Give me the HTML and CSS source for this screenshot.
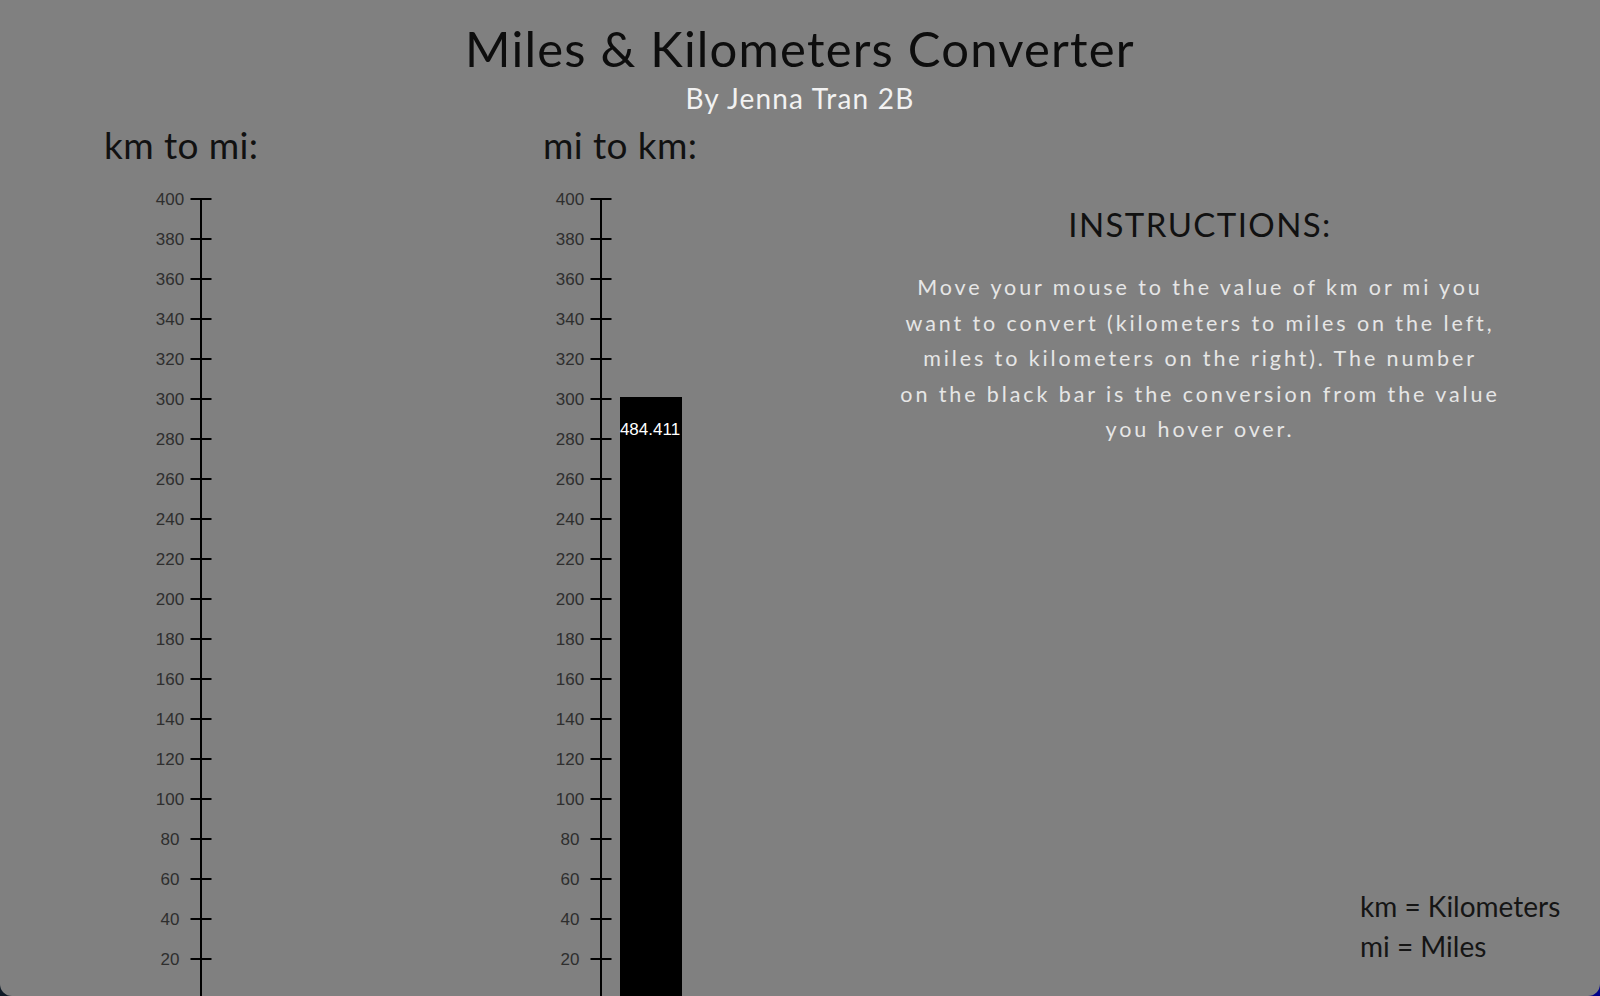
FILE: index.html
```html
<!DOCTYPE html>
<html lang="en">
<head>
<meta charset="utf-8">
<title>Miles &amp; Kilometers Converter</title>
<link rel="stylesheet" href="styles.css">
</head>
<body>
<div class="window">
  <header class="header">
    <h1 class="title">Miles &amp; Kilometers Converter</h1>
    <p class="byline">By Jenna Tran 2B</p>
  </header>
  <main class="main">
    <section class="col col-km">
      <h2 class="chart-title">km to mi:</h2>
      <svg class="chart" width="300" height="836" viewBox="0 0 300 836">
        <g class="axis">
          <line x1="97" y1="34" x2="97" y2="836"/>
        </g>
        <g class="ticks" id="ticks-km"></g>
      </svg>
    </section>
    <section class="col col-mi">
      <h2 class="chart-title">mi to km:</h2>
      <svg class="chart" width="300" height="836" viewBox="0 0 300 836">
        <g class="axis">
          <line x1="58" y1="34" x2="58" y2="836"/>
        </g>
        <g class="ticks" id="ticks-mi"></g>
        <rect class="bar" x="77" y="233" width="62" height="603"/>
        <text class="bar-label" x="107" y="265">484.411</text>
      </svg>
    </section>
    <section class="col col-info">
      <h2 class="info-title">INSTRUCTIONS:</h2>
      <p class="info-text">Move your mouse to the value of km or mi you<br>want to convert (kilometers to miles on the left,<br>miles to kilometers on the right). The number<br>on the black bar is the conversion from the value<br>you hover over.</p>
      <div class="legend">
        <div>km = Kilometers</div>
        <div>mi = Miles</div>
      </div>
    </section>
  </main>
</div>
<script>
(function () {
  function build(id, axisX) {
    var g = document.getElementById(id);
    var ns = "http://www.w3.org/2000/svg";
    for (var v = 20; v <= 400; v += 20) {
      var y = 835 - 2 * v;
      var l = document.createElementNS(ns, "line");
      l.setAttribute("x1", axisX - 10.5);
      l.setAttribute("x2", axisX + 10.5);
      l.setAttribute("y1", y);
      l.setAttribute("y2", y);
      g.appendChild(l);
      var t = document.createElementNS(ns, "text");
      t.setAttribute("x", axisX - 31);
      t.setAttribute("y", y);
      t.setAttribute("class", "tick-label");
      t.textContent = v;
      g.appendChild(t);
    }
  }
  build("ticks-km", 97);
  build("ticks-mi", 58);
})();
</script>
</body>
</html>
```

FILE: styles.css
```css
html, body {
  margin: 0;
  padding: 0;
}

body {
  width: 1600px;
  height: 996px;
  overflow: hidden;
  background: linear-gradient(to right, #0f1b27, #00008a);
  font-family: Lato, "Liberation Sans", sans-serif;
}

.window {
  width: 1600px;
  height: 996px;
  box-sizing: border-box;
  padding-top: 18px;
  background: #808080;
  border-radius: 0 0 12px 12px;
  overflow: hidden;
  display: flex;
  flex-direction: column;
}

.header {
  text-align: center;
}

.title {
  margin: 0;
  font-size: 49px;
  line-height: 60px;
  font-weight: 400;
  letter-spacing: 1.2px;
  color: #0d0d0d;
}

.byline {
  margin: 3px 0 0;
  font-size: 28px;
  line-height: 34px;
  letter-spacing: 1.2px;
  color: #f2f2f2;
}

.main {
  flex: 1;
  min-height: 0;
  margin-top: 7px;
  padding-left: 104px;
  display: flex;
}

.col {
  display: flex;
  flex-direction: column;
}

.col-km {
  width: 439px;
}

.col-mi {
  width: 357px;
}

.col-info {
  width: 600px;
  padding-top: 82px;
  padding-bottom: 30px;
  box-sizing: border-box;
  text-align: center;
}

.chart-title {
  margin: 0;
  padding-top: 3px;
  font-size: 37px;
  line-height: 39px;
  font-weight: 400;
  letter-spacing: 0.4px;
  color: #111;
  white-space: nowrap;
}

.chart {
  display: block;
  overflow: visible;
}

.axis line,
.ticks line {
  stroke: #000;
  stroke-width: 2;
}

.tick-label {
  font-family: "Liberation Sans", Arial, sans-serif;
  font-size: 17px;
  fill: #2e2e2e;
  text-anchor: middle;
  dominant-baseline: central;
}

.bar {
  fill: #000;
}

.bar-label {
  font-family: "Liberation Sans", Arial, sans-serif;
  font-size: 17px;
  fill: #fff;
  text-anchor: middle;
  dominant-baseline: central;
}

.info-title {
  margin: 0;
  font-size: 33px;
  line-height: 40px;
  font-weight: 400;
  letter-spacing: 1.4px;
  color: #111;
}

.info-text {
  margin: 26px 0 0;
  font-size: 21.5px;
  line-height: 35.5px;
  letter-spacing: 2.9px;
  color: #e6e6e6;
  white-space: nowrap;
}

.legend {
  margin-top: auto;
  padding-left: 460px;
  text-align: left;
  font-size: 28px;
  line-height: 39.3px;
  color: #151515;
  white-space: nowrap;
}
```
